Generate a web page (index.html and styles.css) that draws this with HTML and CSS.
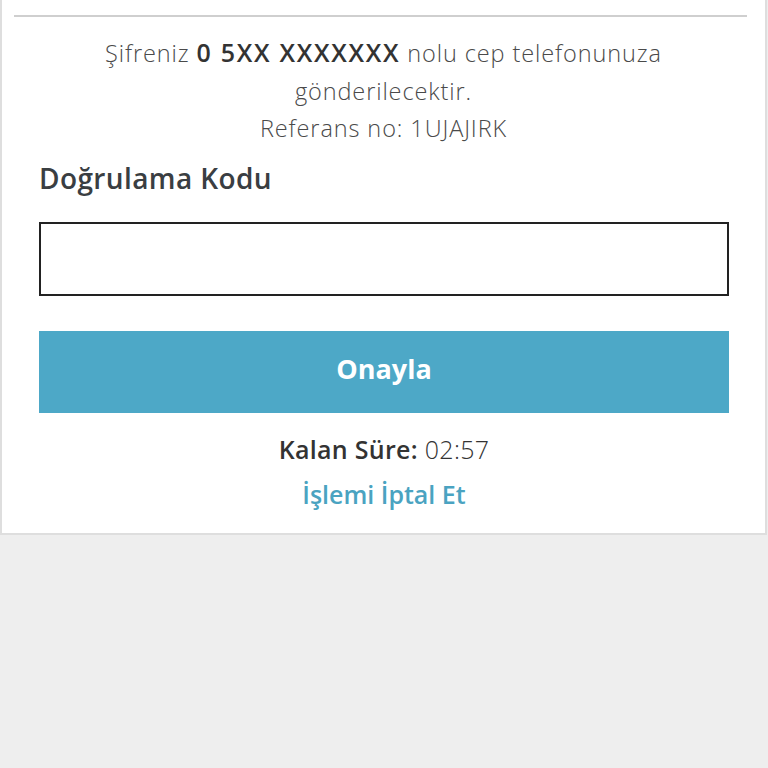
FILE: index.html
```html
<!DOCTYPE html>
<html lang="tr">
<head>
<meta charset="utf-8">
<link rel="stylesheet" href="styles.css">
</head>
<body>
<div class="card">
  <div class="sep"></div>
  <div class="info">
    <p>Şifreniz <b>0 5XX XXXXXXX</b> nolu cep telefonunuza gönderilecektir.</p>
    <p>Referans no: 1UJAJIRK</p>
  </div>
  <div class="form">
    <label class="label" for="code">Doğrulama Kodu</label>
    <input id="code" class="input" type="text">
    <button class="btn">Onayla</button>
    <div class="timer"><b>Kalan Süre:</b> 02:57</div>
    <a class="cancel" href="#">İşlemi İptal Et</a>
  </div>
</div>
</body>
</html>
```

FILE: styles.css
```css
html, body {
  margin: 0;
  padding: 0;
  background: #eeeeee;
  font-family: "Open Sans", Lato, sans-serif;
}
.card {
  background: #fff;
  border: 2px solid #dedede;
  border-top: none;
  margin-right: 1px;
  padding: 15px 0 24px;
}
.sep {
  height: 2px;
  background: #cfcfcf;
  margin: 0 18px 0 12px;
}
.info {
  text-align: center;
  color: #4a4a4a;
  font-size: 23.5px;
  font-weight: 300;
  letter-spacing: 0.9px;
  line-height: 37.5px;
  padding: 18px 80px 0;
}
.info p { margin: 0; }
.info b {
  font-weight: 600;
  font-size: 25px;
  line-height: 1;
  letter-spacing: 1.7px;
  color: #333;
}
.form {
  padding: 0 36px 0 37px;
  display: flex;
  flex-direction: column;
}
.label {
  font-size: 28px;
  font-weight: 600;
  letter-spacing: 0.4px;
  color: #3a3e42;
  margin-top: 13px;
  line-height: 34px;
}
.input {
  margin-top: 27px;
  height: 74px;
  border: 2px solid #222;
  box-sizing: border-box;
  font-size: 22px;
  padding: 0 12px;
  outline: none;
}
.btn {
  margin-top: 35px;
  height: 82px;
  border: none;
  padding: 0 0 6px;
  background: #4da8c7;
  color: #fff;
  font-family: inherit;
  font-size: 27px;
  font-weight: 700;
}
.timer {
  margin-top: 21px;
  text-align: center;
  font-size: 25px;
  font-weight: 300;
  letter-spacing: 0.3px;
  color: #333;
  line-height: 30px;
}
.timer b { font-weight: 600; }
.cancel {
  margin-top: 15px;
  text-align: center;
  font-size: 25px;
  font-weight: 600;
  color: #4aa3c1;
  text-decoration: none;
  line-height: 30px;
}
```
